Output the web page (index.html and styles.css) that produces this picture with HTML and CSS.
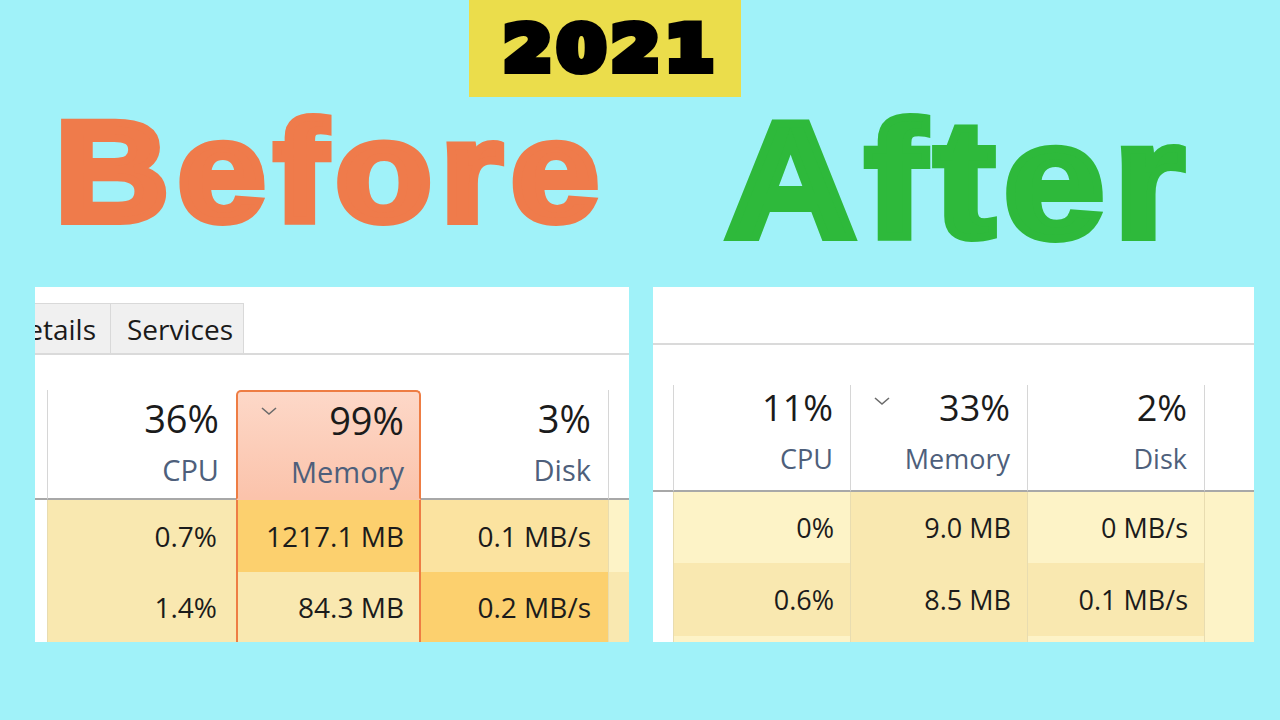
FILE: index.html
```html
<!DOCTYPE html>
<html lang="en">
<head>
  <meta charset="UTF-8" />
  <title>Before / After - Memory usage</title>
  <link rel="stylesheet" href="styles.css">
</head>
<body>

  <div class="year"><span class="num">2021</span></div>

  <div class="titles">
    <h1 class="before">Before</h1>
    <h1 class="after">After</h1>
  </div>

  <div class="panels">

    <!-- old numbers: memory almost full -->
    <section class="panel old">
      <div class="tabs">
        <span class="tab cut">Details</span>
        <span class="tab">Services</span>
      </div>
      <div class="grid">
        <div class="hd gutter"></div>
        <div class="hd line"><div class="val"><b>36%</b><span>CPU</span></div></div>
        <div class="hd mem sorted">
          <svg class="chev" width="18" height="10" viewBox="0 0 18 10"><polyline points="2,2 9,8 16,2" /></svg>
          <div class="val"><b>99%</b><span>Memory</span></div>
        </div>
        <div class="hd"><div class="val"><b>3%</b><span>Disk</span></div></div>
        <div class="hd line"></div>

        <div class="td gutter"></div>
        <div class="td line h1 cpu">0.7%</div>
        <div class="td mem h3">1217.1 MB</div>
        <div class="td h2">0.1 MB/s</div>
        <div class="td line h0"></div>

        <div class="td gutter"></div>
        <div class="td line h1 cpu">1.4%</div>
        <div class="td mem h1">84.3 MB</div>
        <div class="td h3">0.2 MB/s</div>
        <div class="td line h1"></div>
      </div>
    </section>

    <!-- new numbers -->
    <section class="panel new">
      <div class="tabs"></div>
      <div class="grid">
        <div class="hd gutter"></div>
        <div class="hd line"><div class="val"><b>11%</b><span>CPU</span></div></div>
        <div class="hd line">
          <svg class="chev" width="18" height="10" viewBox="0 0 18 10"><polyline points="2,2 9,8 16,2" /></svg>
          <div class="val"><b>33%</b><span>Memory</span></div>
        </div>
        <div class="hd line"><div class="val"><b>2%</b><span>Disk</span></div></div>
        <div class="hd line"></div>

        <div class="td gutter"></div>
        <div class="td line h0">0%</div>
        <div class="td line h1">9.0 MB</div>
        <div class="td line h0">0 MB/s</div>
        <div class="td line h0"></div>

        <div class="td gutter"></div>
        <div class="td line h1">0.6%</div>
        <div class="td line h1">8.5 MB</div>
        <div class="td line h1">0.1 MB/s</div>
        <div class="td line h0"></div>

        <div class="td gutter"></div>
        <div class="td line h0"></div>
        <div class="td line h1"></div>
        <div class="td line h0"></div>
        <div class="td line h0"></div>
      </div>
    </section>

  </div>

</body>
</html>
```

FILE: styles.css
```css
body {
  margin: 0;
  width: 1280px;
  height: 720px;
  overflow: hidden;
  background: #a0f2f9;
  font-family: 'Open Sans', 'Noto Sans', sans-serif;
}

/* big headline words: stroke + a ring of shadows makes them extra heavy,
   scaleX widens the glyphs like a black weight */
.num,
.titles h1 {
  -webkit-text-stroke: 8px currentColor;
  text-shadow: 3px 0, -3px 0, 0 3px, 0 -3px,
               2px 2px, 2px -2px, -2px 2px, -2px -2px;
}

.year {
  margin-left: 469px;
  width: 272px;
  height: 97px;
  box-sizing: border-box;
  padding-left: 12px;
  background: #ebdd4b;
  display: flex;
  align-items: center;
  justify-content: center;
}

.num {
  display: inline-block;
  font-family: 'DejaVu Sans', sans-serif;
  font-weight: bold;
  font-size: 62px;
  line-height: 1;
  letter-spacing: 5px;
  color: #000;
  transform: scaleX(1.12);
}

.titles {
  display: flex;
  align-items: flex-start;
  padding-left: 55px;
  height: 176px;
}

.titles h1 {
  margin: 0;
  font-family: 'Liberation Sans', Arial, sans-serif;
  font-weight: bold;
  line-height: 1;
  white-space: nowrap;
  transform-origin: left top;
}

.before {
  width: 670px;
  font-size: 142px;
  letter-spacing: 8px;
  color: #ef7b4b;
  margin-top: 4px !important;
  transform: scaleX(1.11);
}

.after {
  font-size: 166px;
  letter-spacing: 8px;
  color: #2eb93b;
  transform: scaleX(1.095);
}

/* task manager crops */
.panels {
  display: flex;
  gap: 24px;
  margin-top: 14px;
  padding-left: 35px;
}

.panel {
  background: #fff;
  height: 355px;
  overflow: hidden;
  display: flex;
  flex-direction: column;
}

.old { width: 594px; }
.new { width: 601px; }

.tabs {
  display: flex;
  align-items: flex-end;
  box-sizing: border-box;
  border-bottom: 2px solid #dadada;
  flex-shrink: 0;
}

.old .tabs { height: 68px; }
.new .tabs { height: 58px; }

.tab {
  display: flex;
  align-items: center;
  box-sizing: border-box;
  height: 50px;
  padding: 0 10px 0 16px;
  background: #f0f0f0;
  border: 1px solid #d9d9d9;
  border-bottom: none;
  font-size: 28px;
  color: #1a1a1a;
  white-space: nowrap;
}

.tab.cut {
  width: 76px;
  justify-content: flex-end;
  padding: 0 14px 0 0;
  border-left: none;
  overflow: hidden;
}

.tab + .tab { border-left: none; }

.grid {
  display: grid;
}

.old .grid {
  margin-top: 35px;
  grid-template-columns: 12px 189px 185px 187px 21px;
  grid-template-rows: 110px 72px 70px;
}

.new .grid {
  margin-top: 40px;
  grid-template-columns: 20px 177px 177px 177px 50px;
  grid-template-rows: 107px 71px 73px 20px;
}

.hd, .td {
  box-sizing: border-box;
  min-width: 0;
}

.hd {
  display: flex;
  align-items: flex-start;
  border-bottom: 2px solid #a8a8a8;
  padding-right: 17px;
}

.line { border-left: 1px solid #d6d6d6; }
.td.line { border-left-color: #e8dcb0; }

.val {
  margin-left: auto;
  display: flex;
  flex-direction: column;
  align-items: flex-end;
}

.val b {
  font-weight: normal;
  color: #1b1b1b;
  white-space: nowrap;
}

.val span {
  color: #4e5f7b;
  white-space: nowrap;
}

.old .val { padding-top: 5px; }
.old .val b { font-size: 38px; line-height: 46px; }
.old .val span { font-size: 29px; line-height: 40px; margin-top: 9px; }

.new .val { padding-top: 1px; }
.new .val b { font-size: 36px; line-height: 44px; }
.new .val span { font-size: 27px; line-height: 36px; margin-top: 11px; }

.chev {
  fill: none;
  stroke: #6b6b6b;
  stroke-width: 1.6;
  margin-left: 22px;
  flex-shrink: 0;
}

.old .chev { margin-top: 14px; }
.new .chev { margin-top: 11px; }

/* highlighted memory column */
.mem {
  border-left: 2px solid #ee7d44;
  border-right: 2px solid #ee7d44;
}

.hd.sorted {
  border-top: 2px solid #ee7d44;
  border-bottom-color: #fbc3ab;
  border-radius: 5px 5px 0 0;
  background: linear-gradient(#fdd8c8, #fbc3ab);
  padding-right: 15px;
}

.td {
  display: flex;
  align-items: center;
  justify-content: flex-end;
  padding-right: 17px;
  color: #1b1b1b;
  white-space: nowrap;
}

.old .td { font-size: 28px; }
.new .td { font-size: 27px; padding-right: 16px; }
.old .td.cpu { padding-right: 19px; }
.old .td.mem { padding-right: 15px; }

.gutter { background: #fff; }

/* heat shades for the usage cells */
.h0 { background: #fdf3c7; }
.h1 { background: #f9e8b0; }
.h2 { background: #fbe3a0; }
.h3 { background: #fcd06e; }
```
